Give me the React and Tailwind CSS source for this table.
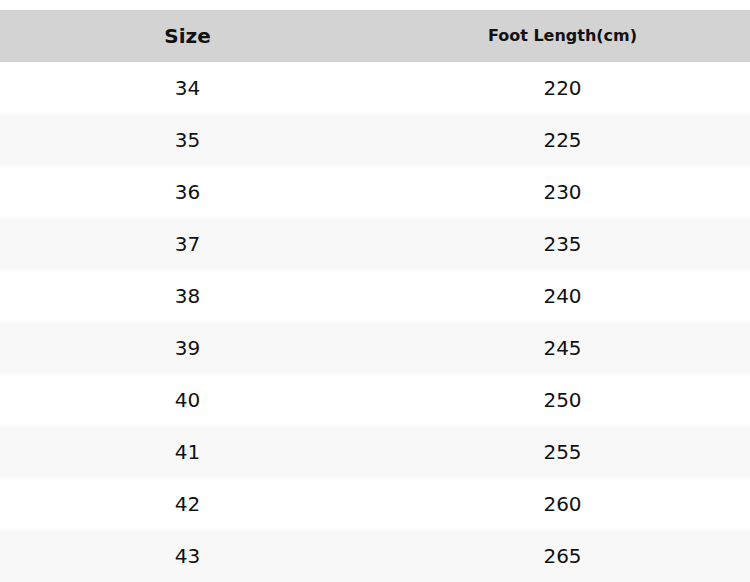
const ROWS = [
  ['34', '220'],
  ['35', '225'],
  ['36', '230'],
  ['37', '235'],
  ['38', '240'],
  ['39', '245'],
  ['40', '250'],
  ['41', '255'],
  ['42', '260'],
  ['43', '265'],
];

export default function App() {
  return (
    <div className="w-[750px] h-[582px] bg-white pt-[10px] overflow-hidden font-['DejaVu_Sans',sans-serif] text-[#111]">
      <table className="w-full border-collapse table-fixed">
        <thead>
          <tr className="bg-[#d3d3d3] h-[52px]">
            <th className="text-[20px] font-bold text-center">Size</th>
            <th className="text-[16px] font-bold text-center">Foot Length(cm)</th>
          </tr>
        </thead>
        <tbody>
          {ROWS.map(([size, len], i) => (
            <tr key={size} className={`h-[52px] ${i % 2 === 1 ? 'bg-[#f8f8f8]' : 'bg-white'}`}>
              <td className="text-[20px] text-center">{size}</td>
              <td className="text-[20px] text-center">{len}</td>
            </tr>
          ))}
        </tbody>
      </table>
    </div>
  );
}
